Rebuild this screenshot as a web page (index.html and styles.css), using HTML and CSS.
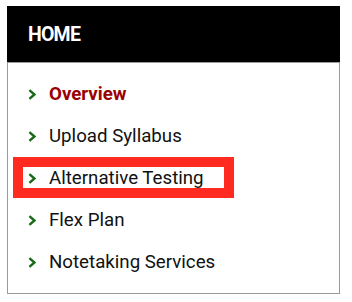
FILE: index.html
```html
<!DOCTYPE html>
<html>
<head>
<meta charset="utf-8">
<link rel="stylesheet" href="styles.css">
</head>
<body>
<nav class="menu">
  <div class="menu-head">HOME</div>
  <ul class="menu-list">
    <li class="item active"><svg class="chev" viewBox="0 0 8 11"><polyline points="1.4,1.2 6.4,5.5 1.4,9.8"/></svg><span>Overview</span></li>
    <li class="item"><svg class="chev" viewBox="0 0 8 11"><polyline points="1.4,1.2 6.4,5.5 1.4,9.8"/></svg><span>Upload Syllabus</span></li>
    <li class="item marked"><svg class="chev" viewBox="0 0 8 11"><polyline points="1.4,1.2 6.4,5.5 1.4,9.8"/></svg><span>Alternative Testing</span><i class="highlight"></i></li>
    <li class="item"><svg class="chev" viewBox="0 0 8 11"><polyline points="1.4,1.2 6.4,5.5 1.4,9.8"/></svg><span>Flex Plan</span></li>
    <li class="item"><svg class="chev" viewBox="0 0 8 11"><polyline points="1.4,1.2 6.4,5.5 1.4,9.8"/></svg><span>Notetaking Services</span></li>
  </ul>
</nav>
</body>
</html>
```
FILE: styles.css
```css
html, body { margin: 0; padding: 0; background: #fff; }
body { font-family: Roboto, "Liberation Sans", sans-serif; }
.menu {
  margin: 6px 0 0 7px;
  width: 333px;
}
.menu-head {
  background: #000;
  color: #fff;
  height: 56px;
  display: flex;
  align-items: center;
  padding-left: 21px;
  font-weight: 700;
  font-size: 19.5px;
  letter-spacing: -0.8px;
  box-sizing: border-box;
}
.menu-list {
  list-style: none;
  margin: 0;
  padding: 10px 0;
  border: 1px solid #9a9a9a;
}
.item {
  position: relative;
  height: 42px;
  display: flex;
  align-items: center;
  padding-left: 20px;
  font-size: 18.7px;
  color: #111;
}
.chev {
  display: block;
  width: 8px;
  height: 11px;
  margin-right: 13px;
  flex: none;
}
.chev polyline {
  fill: none;
  stroke: #186a18;
  stroke-width: 2.4;
}
.active span { color: #9b0000; font-weight: 700; }
.highlight {
  position: absolute;
  left: 5px;
  top: 0;
  width: 201px;
  height: 21px;
  border: 10px solid #ff2b20;
}
```
